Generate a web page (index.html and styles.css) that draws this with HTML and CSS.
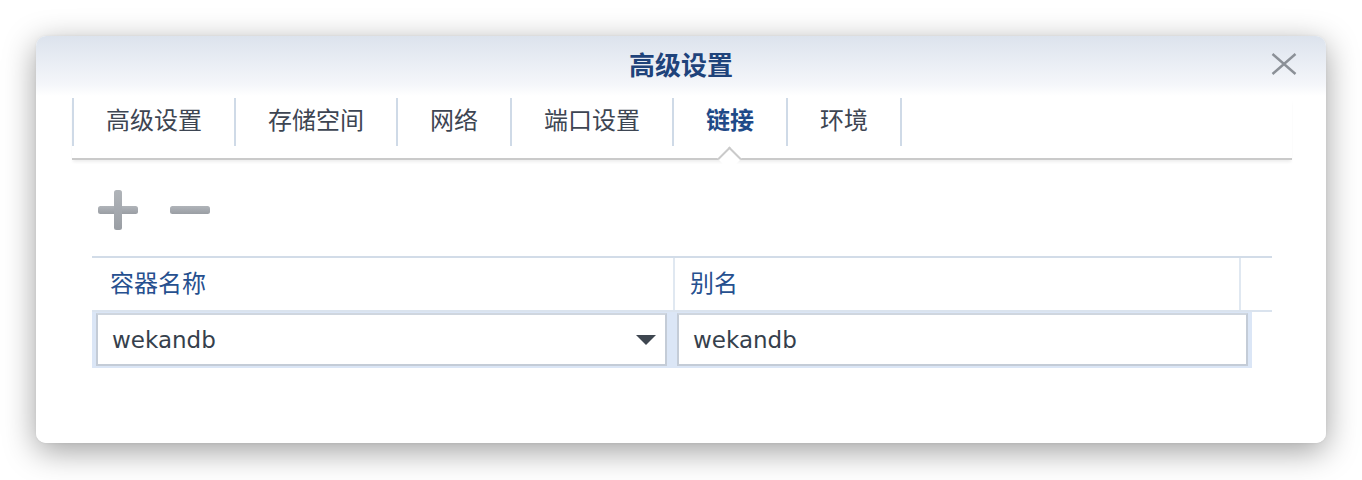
FILE: index.html
```html
<!DOCTYPE html>
<html lang="zh-CN">
<head>
<meta charset="utf-8">
<title>高级设置</title>
<link rel="stylesheet" href="styles.css">
</head>
<body>
<div class="dialog">
  <div class="header">
    <div class="title">高级设置</div>
    <button class="close" aria-label="关闭">
      <svg width="26" height="22" viewBox="0 0 26 22"><path d="M1.5 1 L24.5 21 M24.5 1 L1.5 21" stroke="#8b9097" stroke-width="2.4" fill="none"/></svg>
    </button>
  </div>
  <div class="tabs">
    <div class="tab">高级设置</div>
    <div class="tab">存储空间</div>
    <div class="tab">网络</div>
    <div class="tab">端口设置</div>
    <div class="tab active">链接</div>
    <div class="tab">环境</div>
  </div>
  <div class="content">
    <div class="toolbar">
      <button class="tool" aria-label="新增">
        <svg width="40" height="40" viewBox="0 0 40 40">
          <defs><linearGradient id="g1" x1="0" y1="0" x2="0" y2="1"><stop offset="0" stop-color="#b0b4b9"/><stop offset="1" stop-color="#9a9ea4"/></linearGradient></defs>
          <rect x="0" y="16" width="40" height="8" rx="2.5" fill="url(#g1)"/>
          <rect x="16" y="0" width="8" height="40" rx="2.5" fill="url(#g1)"/>
        </svg>
      </button>
      <button class="tool" aria-label="删除">
        <svg width="40" height="40" viewBox="0 0 40 40">
          <rect x="0" y="16" width="40" height="8" rx="2.5" fill="url(#g1)"/>
        </svg>
      </button>
    </div>
    <div class="grid">
      <div class="grid-head">
        <div class="col c1">容器名称</div>
        <div class="col c2">别名</div>
        <div class="col c3"></div>
      </div>
      <div class="grid-row">
        <div class="field select">
          <span>wekandb</span>
          <svg class="arrow" width="20" height="10" viewBox="0 0 20 10"><path d="M0 0 H20 L10 10 Z" fill="#3e4650"/></svg>
        </div>
        <div class="field">
          <span>wekandb</span>
        </div>
      </div>
    </div>
  </div>
</div>
</body>
</html>
```

FILE: styles.css
```css
html, body {
  margin: 0;
  padding: 0;
  background: #ffffff;
}

html { height: 100%; }

body {
  min-height: 480px;
  box-sizing: border-box;
  font-family: "DejaVu Sans", "Noto Sans CJK SC", sans-serif;
  padding: 36px 0 0 36px;
}

.dialog {
  position: relative;
  width: 1290px;
  height: 407px;
  border-radius: 10px;
  background: linear-gradient(#dce3ed 0, #f4f6fa 48px, #ffffff 60px, #ffffff 100%);
  box-shadow: 0 8px 32px rgba(0, 0, 0, 0.38), 0 0 3px rgba(0, 0, 0, 0.06);
  box-sizing: border-box;
}

.header {
  height: 62px;
  display: flex;
  align-items: center;
  justify-content: center;
}

.title {
  font-family: "Noto Sans CJK SC", sans-serif;
  font-size: 26px;
  font-weight: 700;
  color: #1f437b;
  line-height: 1;
  margin-top: -6px;
}

.close {
  position: absolute;
  top: 17px;
  right: 29px;
  padding: 0;
  border: 0;
  background: transparent;
  width: 26px;
  height: 22px;
  display: block;
}

.close svg { display: block; }

.tabs {
  position: relative;
  display: flex;
  margin: 0 34px 0 36px;
  padding-bottom: 12px;
  border-bottom: 2px solid #cacaca;
  box-shadow: 0 3px 3px -1px rgba(0, 0, 0, 0.07);
}

.tab {
  position: relative;
  height: 48px;
  line-height: 42px;
  padding: 0 32px;
  font-family: "Noto Sans CJK SC", sans-serif;
  font-size: 24px;
  color: #3d4552;
  border-right: 2px solid #cfdae7;
}

.tab:first-child {
  border-left: 2px solid #cfdae7;
}

.tab.active {
  color: #1f4a88;
  font-weight: 700;
}

.tab.active::after {
  content: "";
  position: absolute;
  left: 50%;
  bottom: -21px;
  width: 17px;
  height: 17px;
  margin-left: -9px;
  background: #ffffff;
  border-top: 2px solid #cacaca;
  border-left: 2px solid #cacaca;
  transform: rotate(45deg);
  box-sizing: border-box;
}

.content {
  padding: 30px 54px 0 56px;
}

.toolbar {
  display: flex;
  gap: 32px;
  padding-left: 6px;
  height: 40px;
}

.tool {
  padding: 0;
  border: 0;
  background: transparent;
  width: 40px;
  height: 40px;
}

.tool svg { display: block; }

.grid {
  margin-top: 26px;
  width: 1180px;
}

.grid-head {
  display: flex;
  height: 52px;
  border-top: 2px solid #d2dce8;
  border-bottom: 2px solid #dae3ee;
}

.col {
  font-family: "Noto Sans CJK SC", sans-serif;
  font-size: 24px;
  color: #26508f;
  line-height: 48px;
  padding-left: 18px;
  box-sizing: border-box;
}

.c1 { width: 581px; }
.c2 { width: 566px; border-left: 2px solid #e0e8f1; padding-left: 15px; }
.c3 { width: 33px; border-left: 2px solid #e0e8f1; }

.grid-row {
  display: flex;
  gap: 10px;
  width: 1160px;
  padding: 1px 4px 2px 4px;
  box-sizing: border-box;
  background: #dbe6f6;
}

.field {
  flex: 1;
  height: 53px;
  box-sizing: border-box;
  background: #ffffff;
  border: 2px solid #c4ccd7;
  border-top-color: #cfd6df;
  display: flex;
  align-items: center;
  justify-content: space-between;
  padding: 0 9px 0 14px;
  font-size: 23px;
  color: #363f4c;
}

.arrow { display: block; }
```
